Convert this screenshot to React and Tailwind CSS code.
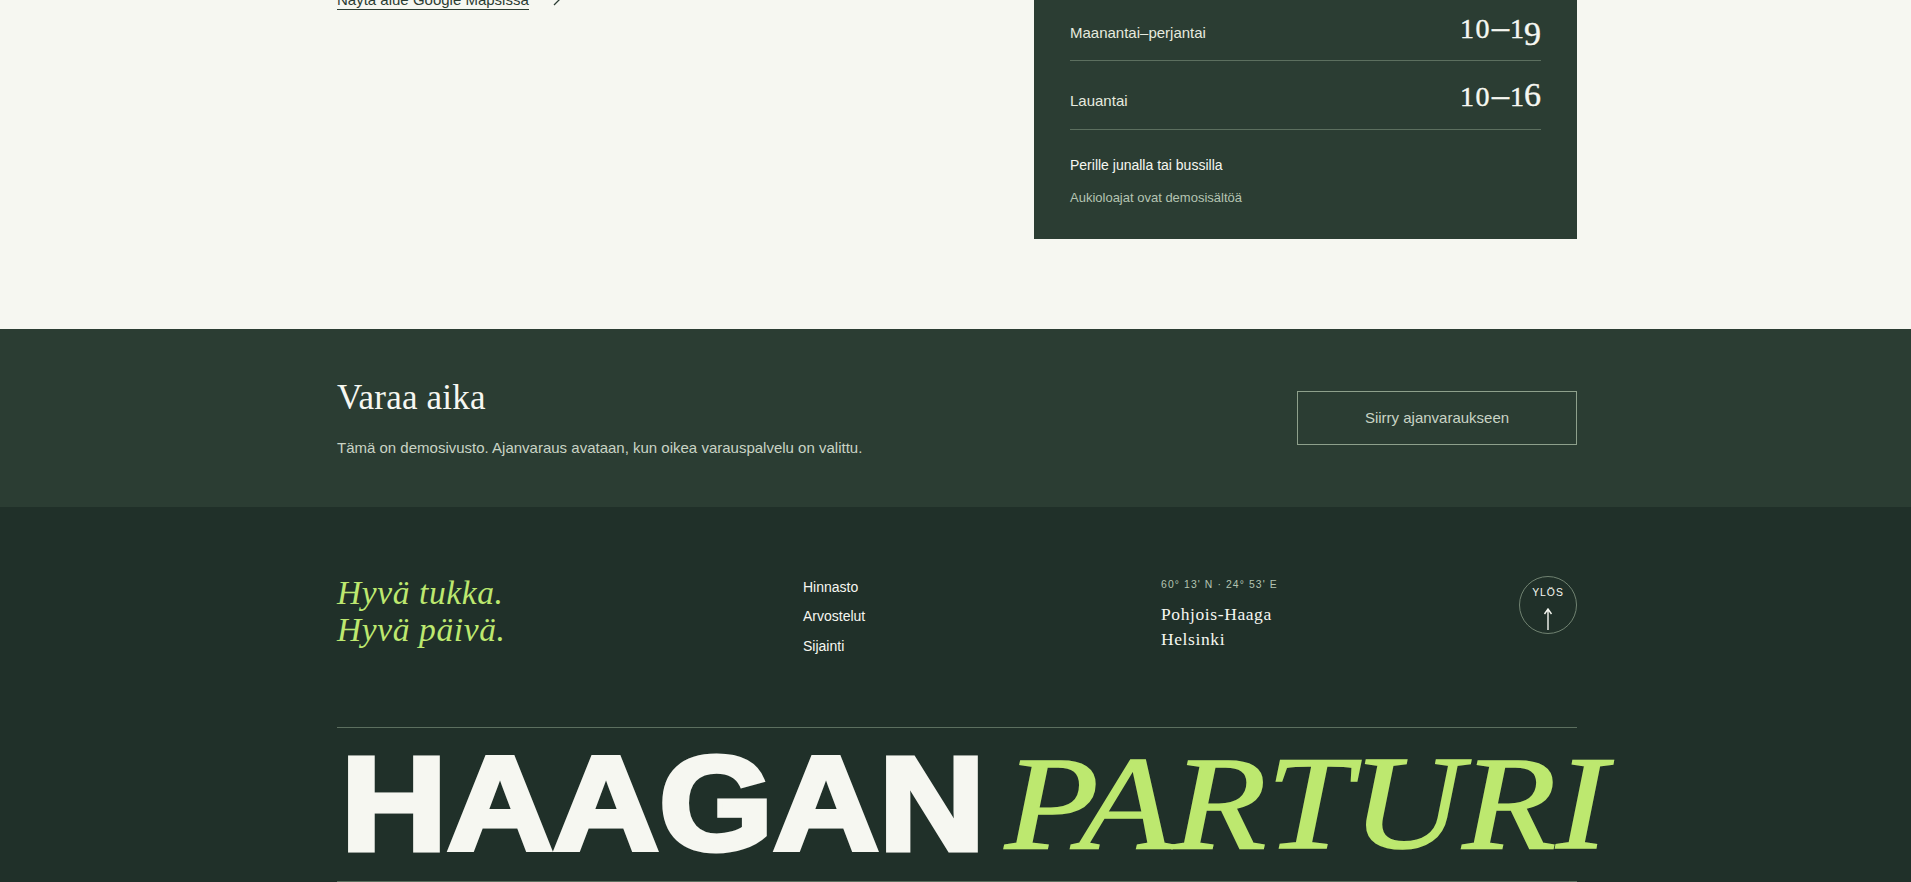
const serif = "font-['Liberation_Serif',serif]";

function Hours({ a, b, up }) {
  return (
    <span className="font-['Liberation_Serif',serif] leading-none whitespace-nowrap text-[#f6f7f1] [-webkit-text-stroke:0.4px_#f6f7f1]">
      <span className="text-[28px] tracking-[1.5px]">10</span>
      <span className="text-[34px] mx-[1px]">–</span>
      <span className="text-[28px]">{a}</span>
      <span className={up ? "text-[34px]" : "text-[34px] align-[-7px]"}>{b}</span>
    </span>
  );
}

export default function App() {
  return (
    <div className="h-[882px] w-full overflow-hidden bg-[#f6f7f1] font-['Liberation_Sans',Arial,sans-serif]">
      <section className="h-[329px] overflow-hidden">
        <div className="ml-[337px] w-[1240px] flex items-start justify-between">
          <div className="-mt-[10px] flex items-center gap-[21px] text-[#2b3d33]">
            <a className="border-b border-[#2b3d33] text-[15px] leading-[19px] whitespace-nowrap">Näytä alue Google Mapsissa</a>
            <svg width="14" height="14" viewBox="0 0 14 14" fill="none" stroke="#2b3d33" strokeWidth="1.3"><path d="M4 2l5 5-5 5" /></svg>
          </div>
          <aside className="w-[543px] h-[239px] bg-[#2b3d33] px-[36px] flex flex-col">
            <div className="h-[61px] border-b border-[#5c6f5f] flex items-baseline justify-between pt-[10px]">
              <span className="text-[15px] text-[#e6eadf]">Maanantai–perjantai</span>
              <Hours a="1" b="9" />
            </div>
            <div className="h-[69px] border-b border-[#5c6f5f] flex items-baseline justify-between pt-[17px]">
              <span className="text-[15px] text-[#e6eadf]">Lauantai</span>
              <Hours a="1" b="6" up />
            </div>
            <p className="mt-[25px] text-[14px] leading-[20px] text-[#f6f7f1]">Perille junalla tai bussilla</p>
            <p className="mt-[13px] text-[13px] leading-[20px] text-[#b4c4b2]">Aukioloajat ovat demosisältöä</p>
          </aside>
        </div>
      </section>

      <section className="h-[178px] bg-[#2b3d33]">
        <div className="ml-[337px] w-[1240px] flex items-start justify-between pt-[49px]">
          <div>
            <h2 className={`${serif} text-[35px] leading-[40px] tracking-[0.2px] text-[#f6f7f1]`}>Varaa aika</h2>
            <p className="mt-[19px] text-[15px] leading-[22px] text-[#c9d4c5]">Tämä on demosivusto. Ajanvaraus avataan, kun oikea varauspalvelu on valittu.</p>
          </div>
          <a className="w-[280px] h-[54px] mt-[13px] border border-[#8ea08c] flex items-center justify-center text-[15px] text-[#c9d4c5]">Siirry ajanvaraukseen</a>
        </div>
      </section>

      <footer className="h-[375px] bg-[#203029] pt-[68px]">
        <div className="ml-[337px] w-[1240px]">
          <div className="h-[84px] grid grid-cols-[466px_358px_1fr]">
            <p className={`${serif} italic text-[33.5px] leading-[36.5px] tracking-[0.6px] text-[#bde86f]`}>Hyvä tukka.<br />Hyvä päivä.</p>
            <nav className="flex flex-col gap-[9.3px] text-[14px] leading-[20px] text-[#f6f7f1] pt-[2px]">
              <a>Hinnasto</a>
              <a>Arvostelut</a>
              <a>Sijainti</a>
            </nav>
            <div className="flex justify-between items-start">
              <div className="pt-[2px]">
                <p className="text-[10.4px] leading-[16px] tracking-[1.1px] text-[#b4c4b2]">60° 13' N · 24° 53' E</p>
                <p className={`${serif} mt-[9px] text-[17.5px] leading-[25px] tracking-[0.6px] text-[#f6f7f1]`}>Pohjois-Haaga<br />Helsinki</p>
              </div>
              <a className="mt-[1px] w-[58px] h-[58px] rounded-full border border-[#708271] flex flex-col items-center pt-[9px] text-[#f6f7f1]">
                <span className="text-[10.4px] leading-[14px] tracking-[1px]">YLÖS</span>
                <svg className="mt-[8px]" width="10" height="22" viewBox="0 0 10 22" fill="none" stroke="#f6f7f1" strokeWidth="1.4"><path d="M5 22V1M1.5 6L5 1l3.5 5" /></svg>
              </a>
            </div>
          </div>
          <div className="mt-[68px] border-t border-b border-[#5c6f5f] h-[155px] flex items-baseline whitespace-nowrap pl-[4px] pt-[9px]">
            <span className="inline-block origin-left scale-x-[1.095] font-bold text-[134px] leading-none text-[#f6f7f1] [-webkit-text-stroke:5px_#f6f7f1]">HAAGAN</span>
            <span className={`${serif} inline-block origin-left scale-x-[1.145] -translate-y-[2px] italic text-[134px] leading-none text-[#bde86f] [-webkit-text-stroke:1.5px_#bde86f] ml-[76px]`}>PARTURI</span>
          </div>
        </div>
      </footer>
    </div>
  );
}
